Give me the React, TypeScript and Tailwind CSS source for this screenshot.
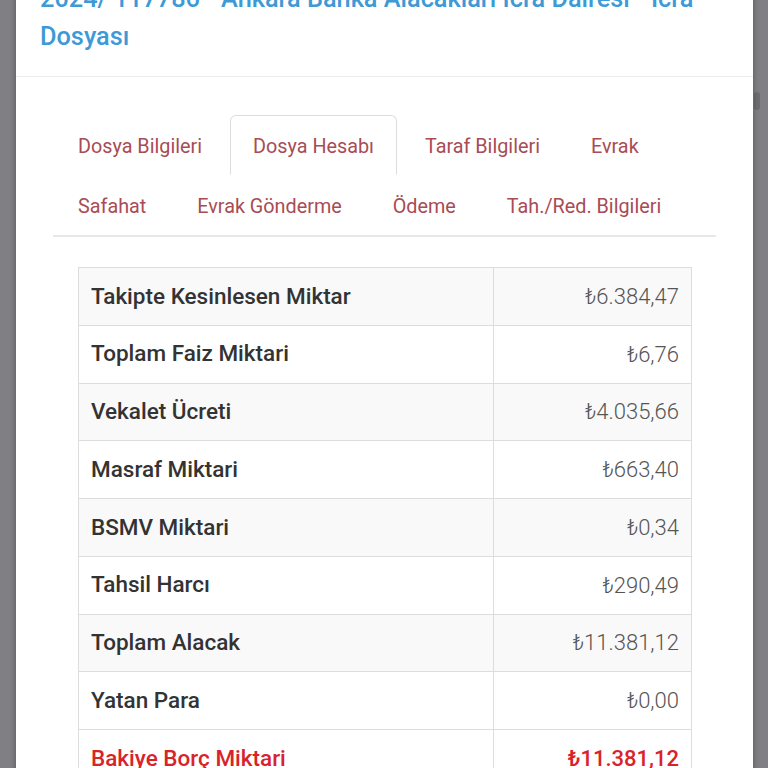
import React from 'react';

const tabs = [
  'Dosya Bilgileri',
  'Dosya Hesabı',
  'Taraf Bilgileri',
  'Evrak',
  'Safahat',
  'Evrak Gönderme',
  'Ödeme',
  'Tah./Red. Bilgileri',
];

const rows = [
  { label: 'Takipte Kesinlesen Miktar', value: '₺6.384,47' },
  { label: 'Toplam Faiz Miktari', value: '₺6,76' },
  { label: 'Vekalet Ücreti', value: '₺4.035,66' },
  { label: 'Masraf Miktari', value: '₺663,40' },
  { label: 'BSMV Miktari', value: '₺0,34' },
  { label: 'Tahsil Harcı', value: '₺290,49' },
  { label: 'Toplam Alacak', value: '₺11.381,12' },
  { label: 'Yatan Para', value: '₺0,00' },
];

export default function App() {
  const active = 'Dosya Hesabı';

  return (
    <div
      className="relative h-screen overflow-hidden bg-[#808084]"
      style={{ fontFamily: 'Roboto, "Noto Sans", "DejaVu Sans", sans-serif' }}
    >
      {/* page scroll handle peeking out behind the modal */}
      <div className="absolute right-[8px] top-[92px] h-[18px] w-[6px] rounded-sm bg-[#6e6e72]" />

      <div className="relative ml-[16px] w-[737px] -mt-[44px] bg-white shadow-[0_0_6px_rgba(0,0,0,0.35)]">
        {/* header */}
        <div className="px-6 pt-6 pb-[20px] border-b border-[#ececec]">
          <h4 className="text-[25.3px] leading-[38px] font-medium text-[#3d9ad6]">
            2024/ 117786 - Ankara Banka Alacakları İcra Dairesi - İcra Dosyası
          </h4>
        </div>

        {/* body */}
        <div className="px-6 pt-[38px] pb-10">
          <div className="mx-[13px]">
            <ul className="flex flex-wrap pl-[1.5px] border-b-2 border-[#e8e8e8]">
              {tabs.map((t) => (
                <li key={t} className="mr-[4px]">
                  <span
                    className={
                      'block h-[60px] px-[22.5px] leading-[61px] text-[19.8px] text-[#a84c55] rounded-t-[6px] border ' +
                      (t === active ? 'border-[#dddddd] border-b-white bg-white' : 'border-transparent')
                    }
                  >
                    {t}
                  </span>
                </li>
              ))}
            </ul>

            <div className="pl-[25px] pr-[24px] pt-[30px]">
              <table className="w-full border-collapse border border-[#dddddd]">
                <tbody>
                  {rows.map((r, i) => (
                    <tr key={r.label} className={i % 2 === 0 ? 'bg-[#f9f9f9]' : 'bg-white'}>
                      <td className="h-[57.75px] pl-[12px] pr-[13px] border border-[#dddddd] text-[22.5px] font-medium text-[#333333] w-[415px]">
                        {r.label}
                      </td>
                      <td className="h-[57.75px] pl-[13px] pr-[12px] border border-[#dddddd] text-[22px] font-light text-[#555555] text-right">
                        {r.value}
                      </td>
                    </tr>
                  ))}
                  <tr className="bg-white">
                    <td className="h-[57.75px] pl-[12px] pr-[13px] border border-[#dddddd] text-[22.5px] font-medium text-[#d9232b]">
                      Bakiye Borç Miktari
                    </td>
                    <td className="h-[57.75px] pl-[13px] pr-[12px] border border-[#dddddd] text-[22px] font-medium text-[#d9232b] text-right">
                      ₺11.381,12
                    </td>
                  </tr>
                </tbody>
              </table>
            </div>
          </div>
        </div>
      </div>
    </div>
  );
}
